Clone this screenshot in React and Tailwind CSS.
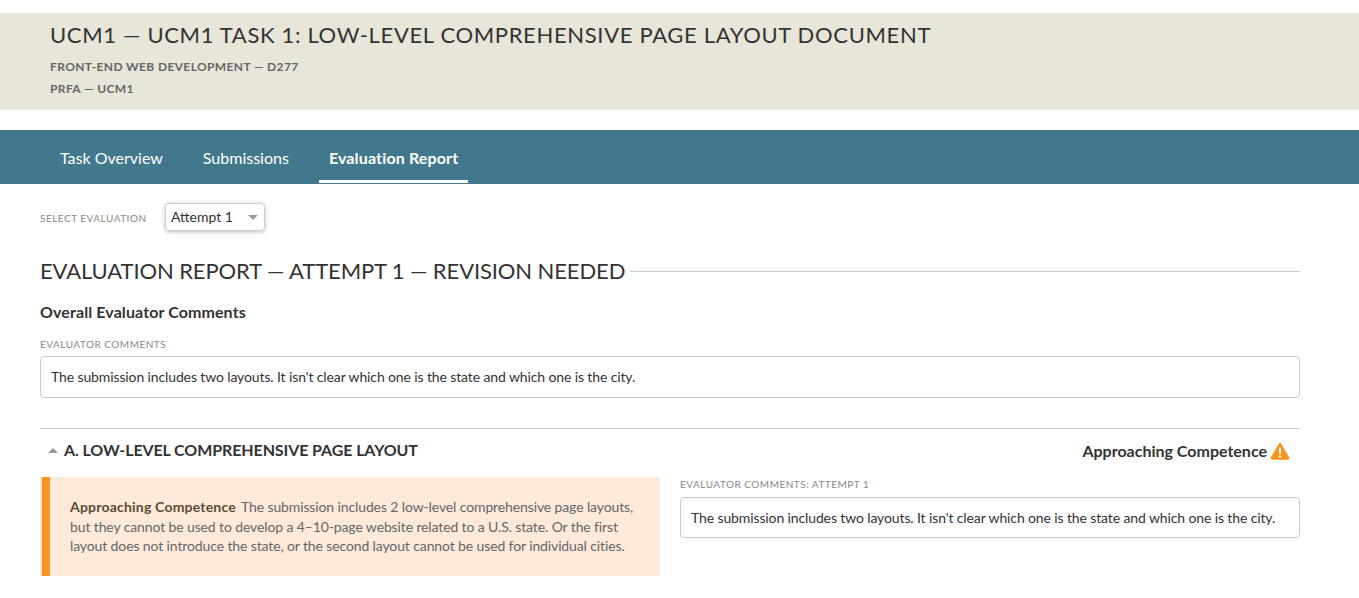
import React from "react";

const tabs = ["Task Overview", "Submissions", "Evaluation Report"];

function WarningIcon() {
  return (
    <svg width="20" height="18" viewBox="0 0 20 18" className="ml-[3px]">
      <path d="M10 1.5 L18.6 16 Q18.6 17 17.6 17 L2.4 17 Q1.4 17 1.4 16 Z" fill="#f7931e" stroke="#f7931e" strokeWidth="1.5" strokeLinejoin="round" />
      <rect x="9" y="5.5" width="2" height="6.5" rx="1" fill="#fff" />
      <circle cx="10" cy="14.4" r="1.2" fill="#fff" />
    </svg>
  );
}

export default function App() {
  return (
    <div className="h-[598px] overflow-hidden bg-white pt-[13px] font-['Lato',sans-serif] text-[#333]">
      {/* Course header */}
      <div className="h-[97px] bg-[#e8e5d9] pl-[50px] pt-[8px]">
        <h1 className="text-[22px] leading-[28px] tracking-[0.66px] text-[#333]">
          UCM1 — UCM1 TASK 1: LOW-LEVEL COMPREHENSIVE PAGE LAYOUT DOCUMENT
        </h1>
        <div className="mt-[7px] text-[12px] leading-[22px] font-bold tracking-[0.37px] text-[#666]">
          <div>FRONT-END WEB DEVELOPMENT — D277</div>
          <div>PRFA — UCM1</div>
        </div>
      </div>

      {/* Tabs */}
      <div className="mt-[20px] flex h-[54px] gap-[20px] bg-[#41788c] pl-[50px]">
        {tabs.map((t, i) => (
          <div
            key={t}
            className={`flex h-[53px] items-center border-b-[3px] px-[10px] pt-[6px] text-[16px] text-white ${i === 2 ? "border-white font-bold tracking-[0.15px]" : "border-transparent"}`}
          >
            {t}
          </div>
        ))}
      </div>

      <div className="w-[1300px] pl-[40px]">
        {/* Select */}
        <div className="mt-[19px] flex items-center">
          <span className="w-[125px] pt-[3px] text-[10px] tracking-[0.5px] text-[#888]">SELECT EVALUATION</span>
          <div className="flex h-[28px] w-[100px] items-center justify-between rounded-[4px] border border-[#ccc] pr-[6px] pb-[2px] pl-[5px] text-[14px] shadow-[0_1px_4px_rgba(0,0,0,0.25)]">
            Attempt 1
            <span className="mt-[2px] h-0 w-0 border-x-[5px] border-t-[5px] border-x-transparent border-t-[#999]" />
          </div>
        </div>

        {/* Section title */}
        <div className="mt-[25px] flex items-center gap-[5px]">
          <h2 className="text-[22px] leading-[30px] font-normal tracking-[-0.11px] whitespace-nowrap">
            EVALUATION REPORT — ATTEMPT 1 — REVISION NEEDED
          </h2>
          <div className="h-px flex-1 bg-[#ccc]" />
        </div>

        <h3 className="mt-[15px] text-[16px] leading-[22px] font-bold tracking-[0.1px]">Overall Evaluator Comments</h3>

        <div className="mt-[14px] text-[10px] leading-[14px] tracking-[0.5px] text-[#888]">EVALUATOR COMMENTS</div>
        <div className="mt-[5px] flex h-[42px] items-center rounded-[4px] border border-[#ccc] px-[10px] pb-[1px] text-[14px] tracking-[-0.12px]">
          The submission includes two layouts. It isn't clear which one is the state and which one is the city.
        </div>

        {/* Competency A */}
        <div className="mt-[30px] border-t border-[#ccc]">
          <div className="flex h-[42px] items-center justify-between pr-[10px] pl-[8px]">
            <div className="flex items-center">
              <span className="mr-[6px] h-0 w-0 border-x-[5px] border-b-[5px] border-x-transparent border-b-[#999]" />
              <span className="text-[16px] font-bold tracking-[-0.1px]">A. LOW-LEVEL COMPREHENSIVE PAGE LAYOUT</span>
            </div>
            <div className="flex items-center pt-[2px] text-[16px] font-bold">
              Approaching Competence
              <WarningIcon />
            </div>
          </div>

          <div className="mt-[6px] flex gap-[20px]">
            <div className="h-[99px] w-[620px] bg-[#fdeadb] pl-[2px]">
              <div className="h-full border-l-[8px] border-[#f7931e] pt-[20px] pr-[20px] pl-[20px] text-[14px] leading-[19.5px] tracking-[-0.12px] text-[#666]">
                <strong className="mr-[2px] font-bold tracking-[0.2px] text-[#5c4a33]">Approaching Competence</strong>{" "}
                The submission includes 2 low-level comprehensive page layouts, but they cannot be used to develop a 4–10-page website related to a U.S. state. Or the first layout does not introduce the state, or the second layout cannot be used for individual cities.
              </div>
            </div>
            <div className="flex-1">
              <div className="text-[10px] leading-[14px] tracking-[0.5px] text-[#888]">EVALUATOR COMMENTS: ATTEMPT 1</div>
              <div className="mt-[6px] flex h-[41px] items-center rounded-[4px] border border-[#ccc] px-[10px] text-[14px] tracking-[-0.12px] whitespace-nowrap">
                The submission includes two layouts. It isn't clear which one is the state and which one is the city.
              </div>
            </div>
          </div>
        </div>
      </div>
    </div>
  );
}
